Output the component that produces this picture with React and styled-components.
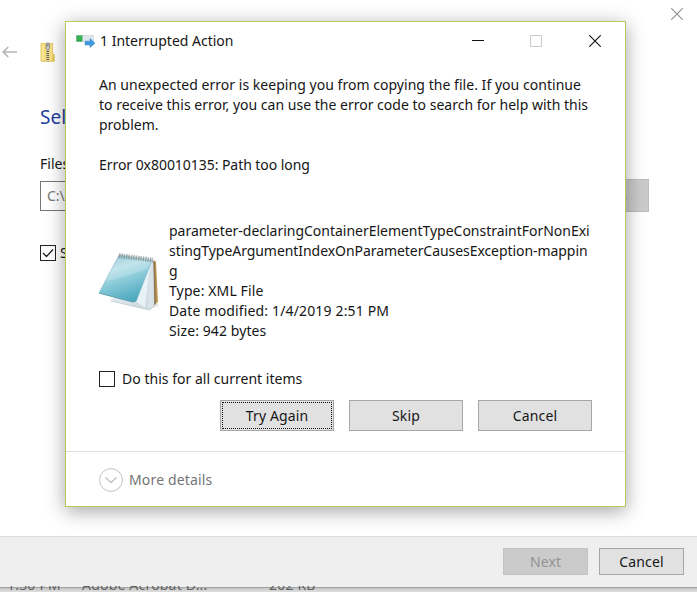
import React from "react";
import styled, { createGlobalStyle } from "styled-components";

const Global = createGlobalStyle`
  *, *::before, *::after { box-sizing: border-box; }
  html, body { margin: 0; padding: 0; overflow: hidden; }
  body { font: 14px/20px "Noto Sans", "Open Sans", sans-serif; color: #161616; background: #fff; }
  svg { display: block; flex: none; }
`;

const Desktop = styled.main`
  position: relative;
  width: 697px;
  height: 592px;
  overflow: hidden;
  display: flex;
  flex-direction: column;
`;
const Wizard = styled.section`
  height: 536px;
  flex: none;
  background: #fff;
  display: flex;
  flex-direction: column;
`;
const WizardBar = styled.header`
  display: flex;
  justify-content: flex-end;
  height: 36px;
  padding: 8px 14px 0 0;
`;
const WizardNav = styled.div`
  display: flex;
  align-items: center;
  height: 32px;
  gap: 22px;
  padding-left: 2px;
`;
const WizardBody = styled.div`
  padding: 36px 48px 0 40px;
  display: flex;
  flex-direction: column;
`;
const Heading = styled.h1`
  margin: 0;
  font-size: 19px;
  font-weight: 400;
  line-height: 26px;
  color: #2140a0;
`;
const FieldLabel = styled.label`
  margin-top: 24px;
`;
const PathRow = styled.div`
  margin-top: 5px;
  display: flex;
  justify-content: space-between;
  align-items: center;
  height: 33px;
`;
const PathField = styled.div`
  width: 460px;
  height: 30px;
  border: 1px solid #777;
  padding: 4px 6px;
  color: #777;
`;
const BrowseButton = styled.div`
  width: 54px;
  height: 33px;
  border: 1px solid #bdbdbd;
  background: #cbcbcb;
  color: #929292;
  text-align: center;
  line-height: 28px;
`;
const CheckRow = styled.div`
  display: flex;
  align-items: center;
  gap: ${(p) => p.$gap}px;
  height: 20px;
  margin-top: ${(p) => p.$top}px;
  letter-spacing: 0.02px;
`;
const CheckBox = styled.span`
  width: 16px;
  height: 16px;
  border: 1px solid #222;
  background: #fff;
  display: flex;
  align-items: center;
  justify-content: center;
`;
const WizardFooter = styled.footer`
  height: 50px;
  flex: none;
  border-top: 1px solid #dcdcdc;
  background: #efefef;
  display: flex;
  justify-content: flex-end;
  align-items: flex-start;
  gap: 11px;
  padding: 11px 13px 0 0;
`;
const FileStrip = styled.div`
  height: 6px;
  flex: none;
  background: linear-gradient(#efefef 1px, #a2a2a2 1px, #a2a2a2 2px, #c6c6c6 2px, #dedede);
  color: #636363;
  display: grid;
  grid-template-columns: 75px 187px 1fr;
  padding-left: 7px;
  overflow: hidden;
  white-space: nowrap;
`;
const FileCell = styled.span`
  margin-top: -11px;
  height: 20px;
  letter-spacing: 0.2px;
`;
const Button = styled.button`
  width: ${(p) => (p.$small ? 85 : 114)}px;
  height: ${(p) => (p.$small ? 27 : 31)}px;
  border: 1px solid #a6a6a6;
  background: #e1e1e1;
  color: #161616;
  font: inherit;
  letter-spacing: 0.12px;
  padding: 1px 0 0;
  outline: ${(p) => (p.$focused ? "1px dotted #111" : "none")};
  outline-offset: -3px;
  &:disabled { background: #cbcbcb; border-color: #c2c2c2; color: #929292; }
`;
const Dialog = styled.section`
  position: absolute;
  left: 65px;
  top: 21px;
  width: 561px;
  height: 486px;
  background: #fff;
  border: 1px solid #b8cb5a;
  box-shadow: 0 4px 18px 0 rgba(0, 0, 0, 0.36);
  display: flex;
  flex-direction: column;
`;
const TitleBar = styled.header`
  display: flex;
  align-items: center;
  flex: none;
  height: 38px;
  padding: 0 24px 0 10px;
`;
const Title = styled.span`
  margin-left: 5px;
  flex: 1;
`;
const WindowControls = styled.div`
  display: grid;
  grid-template-columns: 58px 59px 12px;
`;
const DialogBody = styled.div`
  flex: none;
  height: 392px;
  padding: 15px 33px 0;
  border-bottom: 1px solid #dfdfdf;
`;
const Message = styled.p`
  margin: 0 0 20px;
  white-space: nowrap;
`;
const Line = styled.span`
  display: block;
  letter-spacing: ${(p) => p.$track || 0}px;
`;
const FileInfo = styled.div`
  display: flex;
  margin-top: 46px;
  white-space: nowrap;
`;
const FileIcon = styled.div`
  width: 70px;
  padding-top: 29px;
`;
const Actions = styled.div`
  display: flex;
  justify-content: flex-end;
  gap: 15px;
  margin-top: 11px;
`;
const Details = styled.footer`
  display: flex;
  align-items: center;
  gap: 6px;
  flex: 1;
  padding: 1px 0 0 33px;
  color: #747474;
  letter-spacing: 0.16px;
`;

const CloseIcon = ({ color }) => (
  <svg width="12" height="12" viewBox="0 0 12 12" fill="none" stroke={color} strokeWidth="1.1">
    <path d="M.3.3l11.4 11.4M11.7.3.3 11.7" />
  </svg>
);
const MinimizeIcon = () => (
  <svg width="12" height="12"><path d="M0 5.5h12" stroke="#111" /></svg>
);
const MaximizeIcon = () => (
  <svg width="12" height="12"><path d="M.5.5h11v11H.5z" fill="none" stroke="#c8c8c8" /></svg>
);
const BackIcon = () => (
  <svg width="16" height="12" viewBox="0 0 16 12" fill="none" stroke="#b4b4b4" strokeWidth="1.6">
    <path d="M15 6H1M6.2 1 1.2 6l5 5" />
  </svg>
);
const ZipIcon = () => (
  <svg width="16" height="20" viewBox="0 0 16 20">
    <path d="M1 1.5h11.5v10l1.7 1v6.8H1z" fill="#f2d877" stroke="#dcbc50" strokeWidth=".8" />
    <path d="M1.8 2h2.4v16.5H1.8z" fill="#fae797" />
    <path d="M10.4 2h1.6v16.5h-1.6z" fill="#f9e58e" />
    <path d="M12.5 12.5h1.6v6.2h-1.6z" fill="#e8c450" />
    <path d="M6 8h3.6v11.2H6z" fill="#e6d595" />
    <path d="M7.8 9v10.3" stroke="#66604f" strokeWidth="2.4" strokeDasharray="1 1" />
    <path d="M6.2 1.6q1.6-1.8 3.2 0v4.6L7.8 8.6 6.2 6.2z" fill="#ced0d2" stroke="#7b7d80" strokeWidth=".8" />
    <path d="M7.8 2.2v2" stroke="#444" strokeWidth=".9" />
  </svg>
);
const CopyIcon = () => (
  <svg width="19" height="14" viewBox="0 0 19 14">
    <path d="M.5 1.5h17v6H.5z" fill="#dfe7ed" stroke="#c8d1d8" strokeWidth=".7" />
    <path d="M.4 1.4h6v6.2h-6z" fill="#2fa64b" />
    <path d="M1.4 2.2h4v3.6h-4z" fill="#3cb454" />
    <path d="M9 7.2h5V4.6l5 4.6-5 4.4V11H9z" fill="#3f9ade" stroke="#3187c8" strokeWidth=".5" />
  </svg>
);
const NotepadIcon = () => (
  <svg width="62" height="62" viewBox="0 0 62 62">
    <defs>
      <linearGradient id="cover" x1=".2" y1="0" x2=".6" y2="1">
        <stop offset="0" stopColor="#86bfce" />
        <stop offset=".3" stopColor="#b4dee7" />
        <stop offset=".6" stopColor="#82c7d6" />
        <stop offset="1" stopColor="#48a6bd" />
      </linearGradient>
      <linearGradient id="pages" x1="0" y1="0" x2="1" y2="1">
        <stop offset="0" stopColor="#f4fafc" />
        <stop offset="1" stopColor="#c6d3da" />
      </linearGradient>
    </defs>
    <path d="M10 51l38 9 12-4-2-3z" fill="#e6e6e6" />
    <path d="M55 10l2 2 2 40-5 3z" fill="#c29650" />
    <path d="M53 10l3 2 1 42-3 2z" fill="#8c7752" />
    <path d="M52 10L12 51l39 9 4-4-1-45z" fill="url(#pages)" stroke="#b5c4ca" strokeWidth=".5" />
    <path d="M52 12l-4 46 3 1 4-4-1-43z" fill="#d9e3e7" />
    <path d="M51 13L37 51l9 7z" fill="#e7f2f6" />
    <path d="M20 5l33 5-3 8-12 31q-1 3-4 3L0 43z" fill="url(#cover)" stroke="#73aebc" strokeWidth=".5" />
    <path d="M18 9L7 31Q27 27 48 19l4-7z" fill="#fff" opacity=".2" />
    <path d="M0 43l34 9q3 0 4-3" fill="none" stroke="#62a1b1" />
    <path d="M20 5.5l34 4.6" stroke="#90989a" strokeWidth="4.4" strokeDasharray="1.3 1.1" />
    <path d="M20 3.7l34 4.6" stroke="#c3c8c9" strokeWidth="1.3" strokeDasharray="1.3 1.1" />
  </svg>
);

export default function App() {
  return (
    <Desktop>
      <Global />
      <Wizard>
        <WizardBar><CloseIcon color="#8d8d8d" /></WizardBar>
        <WizardNav><BackIcon /><ZipIcon /></WizardNav>
        <WizardBody>
          <Heading>Sel</Heading>
          <FieldLabel>Files</FieldLabel>
          <PathRow>
            <PathField>C:\</PathField>
            <BrowseButton>...</BrowseButton>
          </PathRow>
          <CheckRow $gap={4} $top={31}>
            <CheckBox>
              <svg width="12" height="10" viewBox="0 0 12 10"><path d="M1 5l3.5 3.5L11 1.5" fill="none" stroke="#222" strokeWidth="1.3" /></svg>
            </CheckBox>
            S
          </CheckRow>
        </WizardBody>
      </Wizard>
      <WizardFooter>
        <Button $small disabled>Next</Button>
        <Button $small>Cancel</Button>
      </WizardFooter>
      <FileStrip>
        <FileCell>1:30 PM</FileCell>
        <FileCell>Adobe Acrobat D...</FileCell>
        <FileCell>202 KB</FileCell>
      </FileStrip>
      <Dialog>
        <TitleBar>
          <CopyIcon />
          <Title>1 Interrupted Action</Title>
          <WindowControls>
            <MinimizeIcon />
            <MaximizeIcon />
            <CloseIcon color="#111" />
          </WindowControls>
        </TitleBar>
        <DialogBody>
          <Message>
            <Line $track={0.035}>An unexpected error is keeping you from copying the file. If you continue</Line>
            <Line $track={0.01}>to receive this error, you can use the error code to search for help with this</Line>
            <Line>problem.</Line>
          </Message>
          <Message><Line $track={-0.05}>Error 0x80010135: Path too long</Line></Message>
          <FileInfo>
            <FileIcon><NotepadIcon /></FileIcon>
            <div>
              <Line $track={-0.02}>parameter-declaringContainerElementTypeConstraintForNonExi</Line>
              <Line $track={-0.06}>stingTypeArgumentIndexOnParameterCausesException-mappin</Line>
              <Line>g</Line>
              <Line $track={0.12}>Type: XML File</Line>
              <Line $track={0.15}>Date modified: 1/4/2019 2:51 PM</Line>
              <Line $track={0.09}>Size: 942 bytes</Line>
            </div>
          </FileInfo>
          <CheckRow $gap={7} $top={28}><CheckBox />Do this for all current items</CheckRow>
          <Actions>
            <Button $focused>Try Again</Button>
            <Button>Skip</Button>
            <Button>Cancel</Button>
          </Actions>
        </DialogBody>
        <Details>
          <svg width="24" height="24" viewBox="0 0 24 24" fill="none">
            <circle cx="12" cy="12" r="11.4" stroke="#c3c3c3" />
            <path d="M6.5 9.5l5.5 5 5.5-5" stroke="#c3c3c3" strokeWidth="1.6" />
          </svg>
          More details
        </Details>
      </Dialog>
    </Desktop>
  );
}
